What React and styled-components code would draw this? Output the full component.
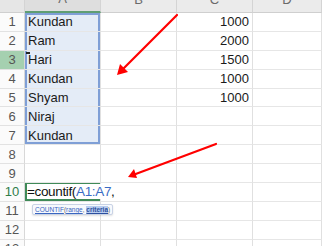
import React from "react";
import styled, { createGlobalStyle } from "styled-components";

const Global = createGlobalStyle`
  html, body { margin: 0; padding: 0; background: #ffffff; }
  body { width: 322px; height: 246px; overflow: hidden; font-family: "Liberation Sans", Arial, sans-serif; }
`;

const ROW_H = 18.9;

const Page = styled.div`
  position: relative;
  width: 322px;
  height: 246px;
  overflow: hidden;
  background: #fff;
`;

const Sheet = styled.div`
  display: grid;
  grid-template-columns: 25px 76px 76px 76px 1fr;
  grid-template-rows: 13px repeat(13, ${ROW_H}px);
`;

const ColHead = styled.div`
  background: ${(p) => (p.$active ? "#dedede" : "#ebebeb")};
  border-right: 1px solid #d4d4d4;
  border-bottom: ${(p) => (p.$active ? "2px solid #5f9e73" : "1px solid #cfcfcf")};
  box-sizing: border-box;
  display: flex;
  align-items: flex-end;
  justify-content: center;
  overflow: hidden;
  color: #6a6a6a;
  font-size: 13px;
  line-height: 13px;
  span { transform: translateY(-6px); }
`;

const Corner = styled(ColHead)`
  background: #e6e6e6;
`;

const RowHead = styled.div`
  background: ${(p) => (p.$hl ? "#a5d0b0" : "#fbfbfb")};
  border-bottom: 1px solid #e2e2e2;
  border-right: 1px solid #d8d8d8;
  box-sizing: border-box;
  display: flex;
  align-items: center;
  justify-content: center;
  font-size: 13px;
  color: ${(p) => (p.$green ? "#2f7d4a" : "#555")};
`;

const Cell = styled.div`
  position: relative;
  box-sizing: border-box;
  border-right: 1px solid #e0e0e0;
  border-bottom: 1px solid #e6e6e6;
  background: ${(p) => (p.$sel ? "#e4ecf7" : "#fff")};
  box-shadow: ${(p) =>
    p.$sel
      ? `inset 2px 0 0 #7f9fd6, inset -2px 0 0 #7f9fd6${p.$first ? ", inset 0 2px 0 #7f9fd6" : ""}${
          p.$last ? ", inset 0 -2px 0 #7f9fd6" : ""
        }`
      : "none"};
  display: flex;
  align-items: center;
  justify-content: ${(p) => (p.$num ? "flex-end" : "flex-start")};
  padding: 0 3px;
  font-size: 13px;
  color: #1a1a1a;
  white-space: nowrap;
`;

const Cursor = styled.div`
  position: absolute;
  left: 1px;
  top: 1px;
  width: 4px;
  height: 2px;
  background: #222;
`;

const EditCell = styled(Cell)`
  overflow: visible;
  box-shadow: inset 0 0 0 2px #3f8a58;
  padding-left: 2px;
  z-index: 2;
  background: transparent;
`;

const Formula = styled.span`
  font-size: 13.5px;
  letter-spacing: -0.35px;
  color: #111;
  background: #fff;
  padding-right: 2px;
`;

const Ref = styled.span`
  color: #3a6bc4;
`;

const Tip = styled.div`
  position: absolute;
  left: 7px;
  top: 21px;
  padding: 1px 2px;
  border: 1px solid #c9d3e6;
  border-radius: 2px;
  background: #f7f9fd;
  font-size: 6.5px;
  line-height: 7px;
  color: #666;
  white-space: nowrap;
  box-shadow: 0 1px 2px rgba(0, 0, 0, 0.12);
`;

const TipLink = styled.span`
  color: #3a66c0;
  text-decoration: underline;
`;

const TipCurrent = styled.span`
  color: #2c4f9e;
  background: #b9cdf0;
  font-weight: bold;
  text-decoration: underline;
`;

const Arrows = styled.svg`
  position: absolute;
  left: 0;
  top: 0;
  pointer-events: none;
  z-index: 5;
`;

const names = ["Kundan", "Ram", "Hari", "Kundan", "Shyam", "Niraj", "Kundan"];
const nums = [1000, 2000, 1500, 1000, 1000];

export default function App() {
  const rows = [];
  for (let r = 1; r <= 13; r++) {
    rows.push(
      <RowHead key={`h${r}`} $hl={r === 3} $green={r === 10}>
        {r}
      </RowHead>
    );
    const sel = r <= 7;
    if (r === 10) {
      rows.push(
        <EditCell key={`a${r}`}>
          <Formula>
            =countif(<Ref>A1:A7</Ref>,
          </Formula>
          <Tip>
            <TipLink>COUNTIF</TipLink>(<TipLink>range</TipLink>, <TipCurrent>criteria</TipCurrent>)
          </Tip>
        </EditCell>
      );
    } else {
      rows.push(
        <Cell key={`a${r}`} $sel={sel} $first={r === 1} $last={r === 7}>
          {r === 3 && <Cursor />}
          {sel ? names[r - 1] : ""}
        </Cell>
      );
    }
    rows.push(<Cell key={`b${r}`} />);
    rows.push(
      <Cell key={`c${r}`} $num>
        {r <= 5 ? nums[r - 1] : ""}
      </Cell>
    );
    rows.push(<Cell key={`d${r}`} />);
  }

  return (
    <Page>
      <Global />
      <Sheet>
        <Corner />
        <ColHead $active>
          <span>A</span>
        </ColHead>
        <ColHead>
          <span>B</span>
        </ColHead>
        <ColHead>
          <span>C</span>
        </ColHead>
        <ColHead>
          <span>D</span>
        </ColHead>
        {rows}
      </Sheet>
      <Arrows width="322" height="246" viewBox="0 0 322 246">
        <g stroke="#f00" strokeWidth="2.2" strokeLinecap="round" fill="none">
          <line x1="177" y1="15" x2="121" y2="71" />
          <line x1="216" y1="144" x2="133" y2="175" />
        </g>
        <g fill="#f00">
          <polygon points="117,75 120,64 128,72" />
          <polygon points="128,177 134,169 137,178" />
        </g>
      </Arrows>
    </Page>
  );
}
